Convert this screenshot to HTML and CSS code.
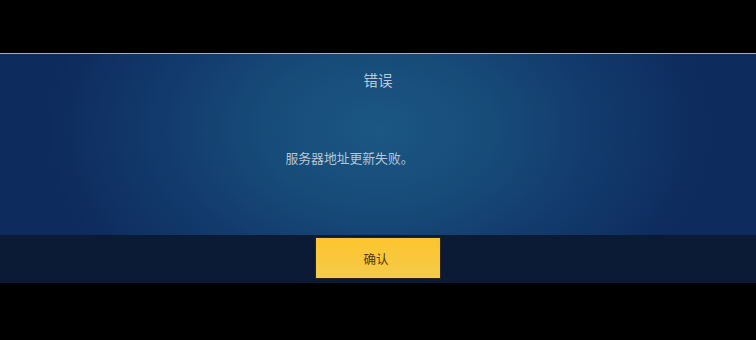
FILE: index.html
```html
<!DOCTYPE html>
<html lang="zh-CN">
<head>
<meta charset="utf-8">
<link rel="stylesheet" href="styles.css">
</head>
<body>
<div class="screen">
  <div class="dialog">
    <div class="body">
      <div class="title">错误</div>
      <div class="message">服务器地址更新失败。</div>
    </div>
    <div class="footer">
      <button class="confirm">确认</button>
    </div>
  </div>
</div>
</body>
</html>
```
FILE: styles.css
```css
html, body {
  margin: 0;
  padding: 0;
  background: #000;
}
.screen {
  width: 756px;
  height: 340px;
  background: #000;
  padding-top: 53px;
  box-sizing: border-box;
  font-family: "Noto Sans CJK SC", "Noto Sans", sans-serif;
}
.dialog {
  border-top: 1px solid #9fb0c2;
  display: flex;
  flex-direction: column;
}
.body {
  height: 181px;
  background:
    radial-gradient(ellipse 330px 220px at 378px 75px, #1b5784 0%, #174b78 35%, #123b6c 65%, #0e2b5d 100%);
  display: flex;
  flex-direction: column;
  align-items: center;
}
.title {
  margin-top: 15px;
  font-size: 14.5px;
  line-height: 22px;
  color: #b9cadb;
}
.message {
  margin-top: 58px;
  margin-left: -57px;
  font-size: 12.8px;
  line-height: 18px;
  color: #b6c6d6;
}
.footer {
  height: 48px;
  background: #0b1a35;
  display: flex;
  justify-content: center;
  align-items: flex-start;
  padding-top: 2px;
  box-sizing: border-box;
}
.confirm {
  width: 126px;
  height: 42px;
  margin-left: -1px;
  border: 1px solid #2a2410;
  background: linear-gradient(180deg, #fec52f 0%, #f7c83d 60%, #f3cc4c 100%);
  color: #553610;
  font-family: "Noto Sans CJK SC", "Noto Sans", sans-serif;
  font-size: 12.5px;
  padding: 0;
  padding-top: 1px;
  padding-right: 3px;
}
```
